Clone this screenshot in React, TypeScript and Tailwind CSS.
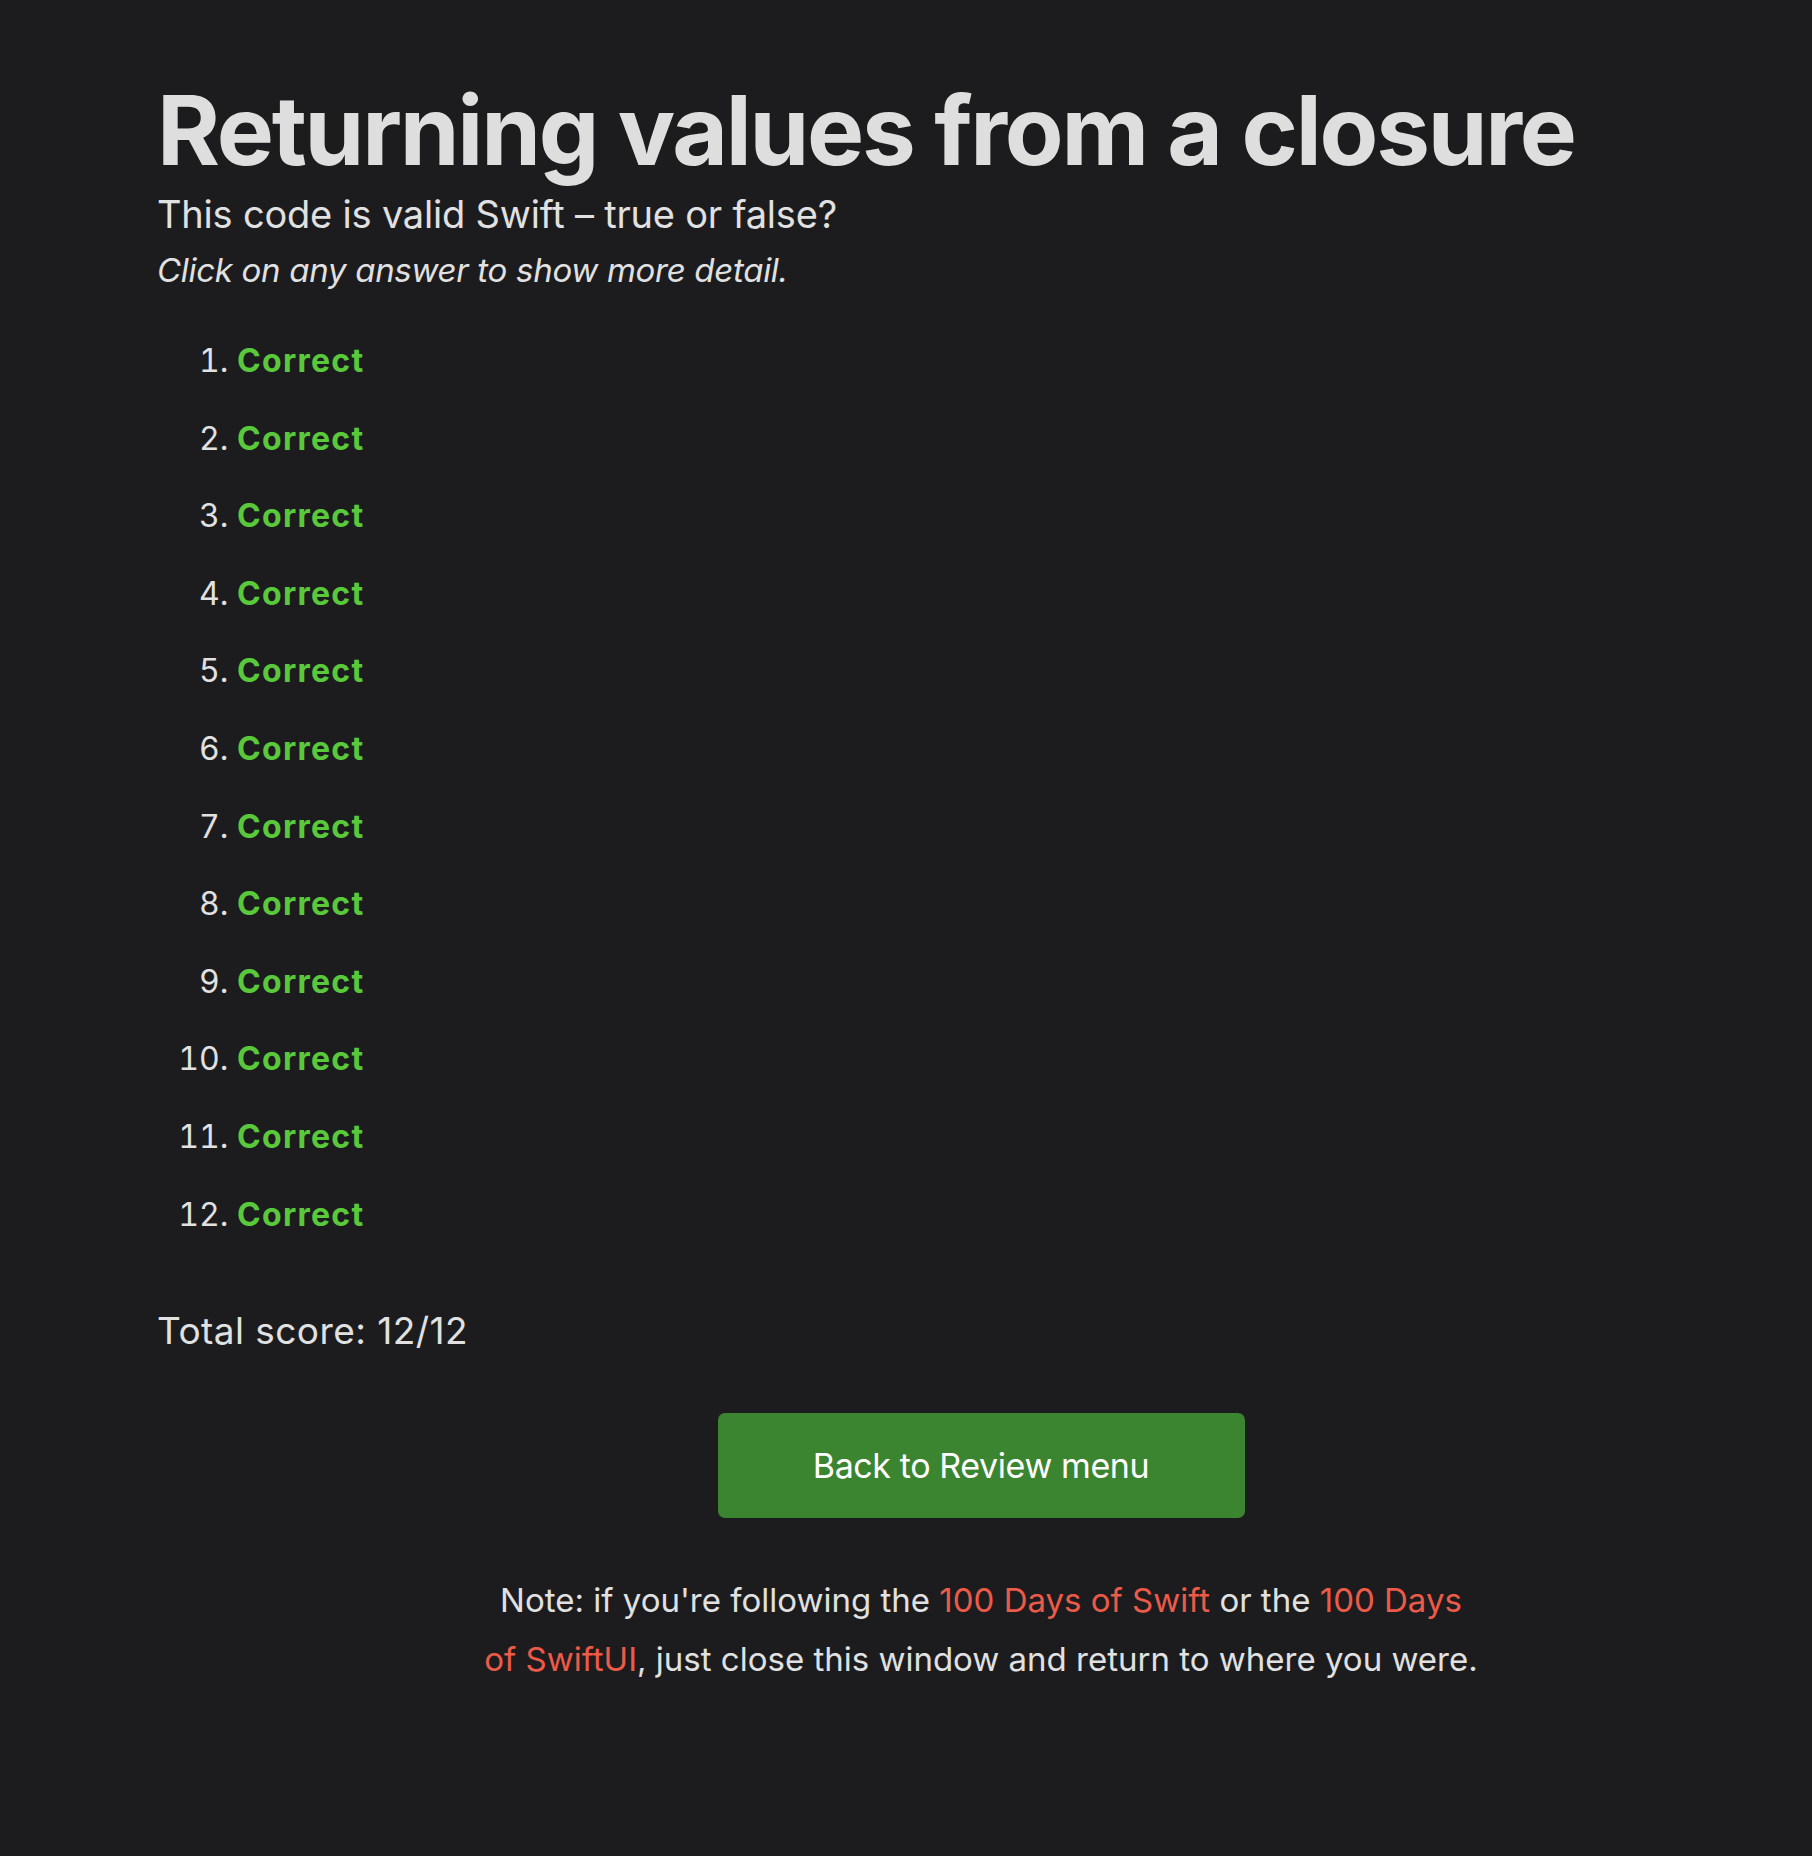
import React from 'react';

const answers = Array.from({ length: 12 }, (_, i) => i + 1);

export default function App() {
  return (
    <main className="min-h-screen bg-[#1c1c1e] pb-[140px] font-['Inter',sans-serif] text-[#e1e1e1]">
      <div className="w-[1612px] pl-[157px] pt-[82px] box-content">
        <h1 className="text-[96px] font-bold leading-[96px] tracking-[-2.2px] text-[#dedede]">
          Returning values from a closure
        </h1>
        <p className="mt-[13px] text-[38px] leading-[46px] tracking-[-0.2px]">This code is valid Swift – true or false?</p>
        <p className="mt-[13px] text-[33px] italic leading-[40px] tracking-[-0.3px]">Click on any answer to show more detail.</p>

        <ol className="mt-[32px] list-decimal pl-[80px] text-[32px] leading-[77.6px]">
          {answers.map((n) => (
            <li key={n} className="marker:text-[#e1e1e1]">
              <span className="cursor-pointer font-bold tracking-[1.3px] text-[#5ac83b]">Correct</span>
            </li>
          ))}
        </ol>

        <p className="mt-[56px] text-[37px] leading-[44px] tracking-[0.45px]">Total score: 12/12</p>

        <div className="pl-[36px]">
          <div className="mt-[60px] flex justify-center">
            <button className="h-[105px] w-[527px] rounded-[7px] bg-[#3c8530] text-[34px] tracking-[-0.4px] text-white">
              Back to Review menu
            </button>
          </div>

          <p className="mx-auto mt-[53px] w-[996px] text-center text-[33px] leading-[59px]">
            Note: if you're following the{' '}
            <a href="#" className="text-[#ec5a48]">100 Days of Swift</a> or the{' '}
            <a href="#" className="text-[#ec5a48]">100 Days of SwiftUI</a>, just close this window and return to where
            you were.
          </p>
        </div>
      </div>
    </main>
  );
}
